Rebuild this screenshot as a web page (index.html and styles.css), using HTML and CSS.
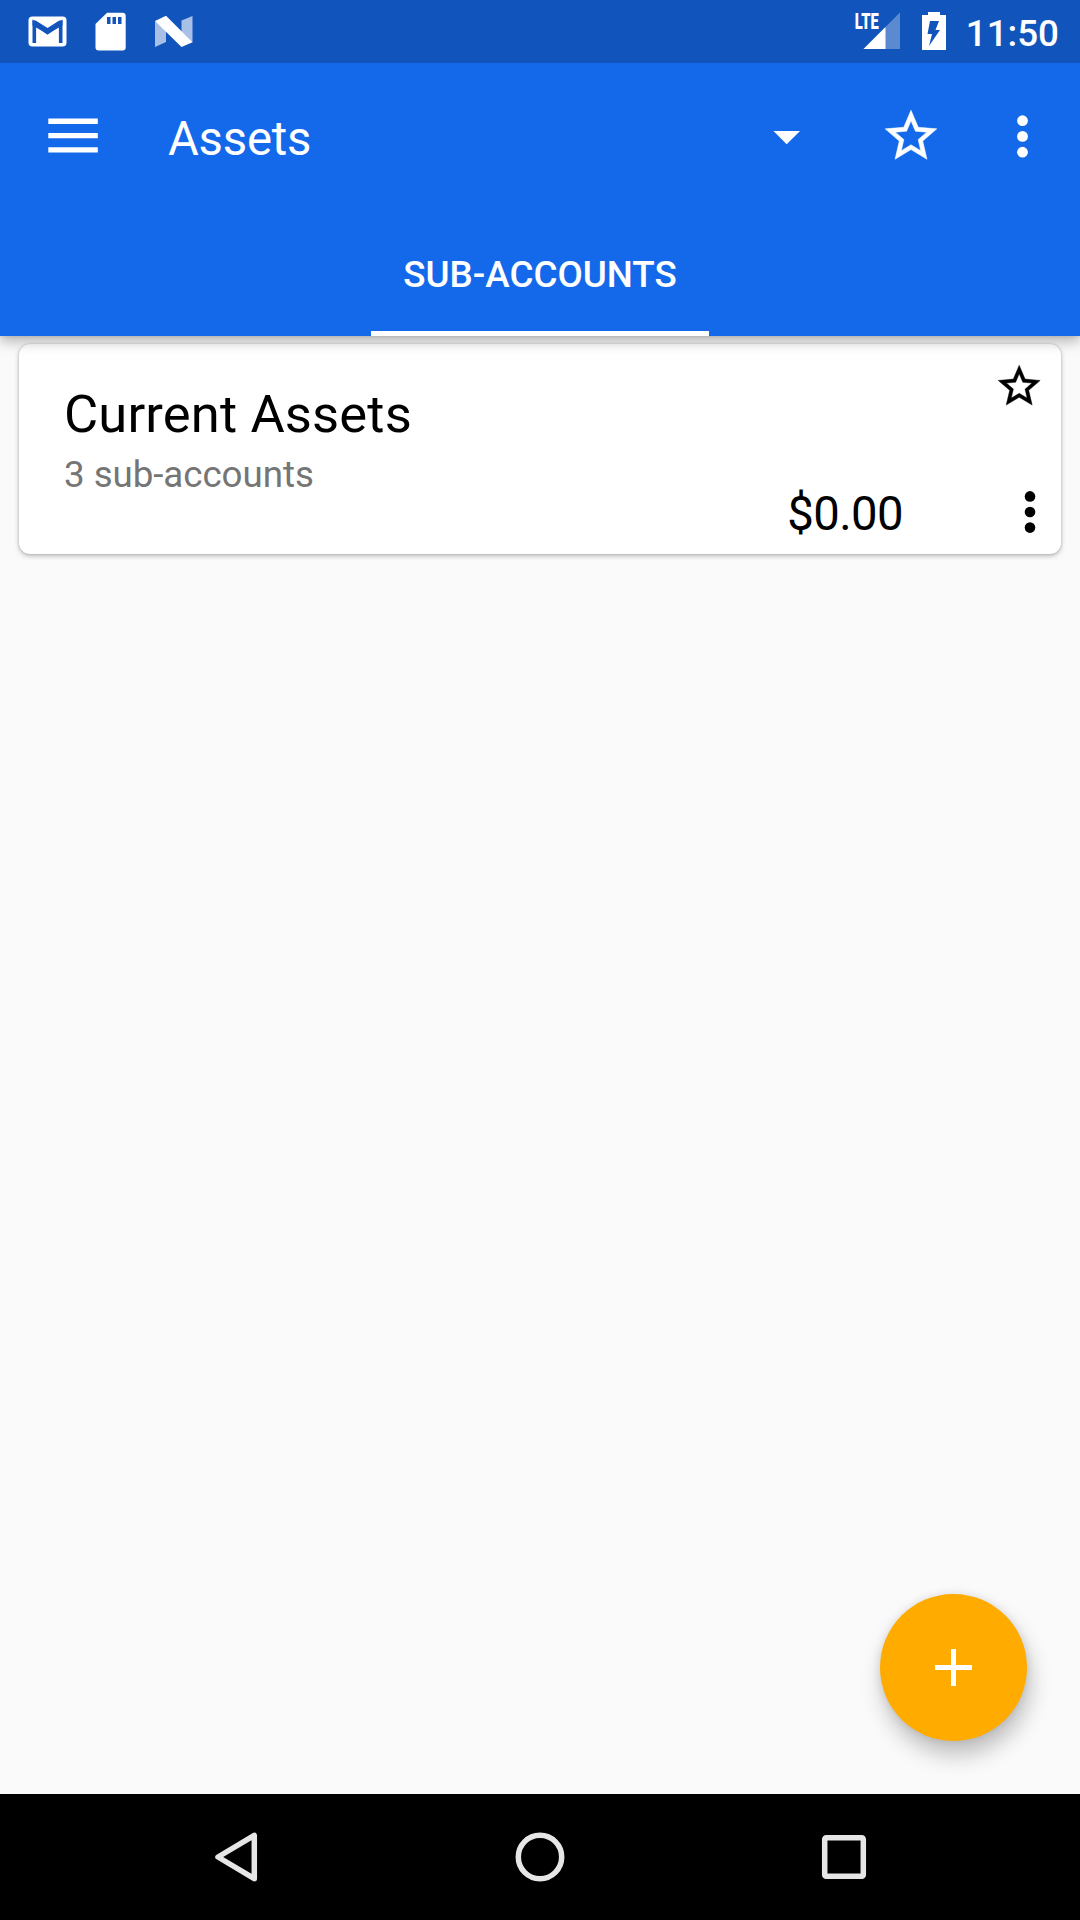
FILE: index.html
```html
<!DOCTYPE html>
<html lang="en">
<head>
<meta charset="utf-8">
<title>Assets</title>
<link rel="stylesheet" href="styles.css">
</head>
<body>
<div class="screen">
  <header class="header">
    <div class="status-bar">
      <div class="notifications">
        <svg width="40" height="40" viewBox="0 0 40 40"><rect x="1.500" y="4.500" width="38" height="30" rx="4" fill="#fff"/><path d="M7.300 31V11l13.200 9.500L33.700 11V31" fill="none" stroke="#1155bc" stroke-width="3.600"/><path d="M5.500 8.500h3.200l11.800 7.500 11.800-7.500h3.200v5l-15 8.500-15-8.500z" fill="#1155bc"/></svg>
        <svg width="32" height="40" viewBox="0 0 32 40"><path d="M12 .7h15.500a3.200 3.200 0 0 1 3.200 3.200v31.400a3.200 3.200 0 0 1-3.200 3.200H3.700A3.200 3.200 0 0 1 .5 35.300V12z" fill="#fff"/><path d="M12 5h3.500v7H12zM17.500 5H21v7h-3.500zM23 5h3.500v7H23z" fill="#1155bc"/></svg>
        <svg width="40" height="40" viewBox="0 0 40 40"><path d="M1 9l11 8v13L1 35zM27.500 8.500L38.500 4v26.500l-11-8z" fill="#a8c0e6"/><path d="M1 9l11-5.200 26.500 26.500L27.500 35z" fill="#fff"/></svg>
      </div>
      <div class="system">
        <svg class="signal" width="48" height="46" viewBox="0 0 48 46"><path d="M47 6.500V43H10.500z" fill="#5b8ad1"/><path d="M32.500 21v22h-22z" fill="#fff"/><path d="M0 6h26v18H0z" fill="#1155bc"/><text x="1.700" y="22.800" class="lte" textLength="24" lengthAdjust="spacingAndGlyphs">LTE</text></svg>
        <svg class="battery" width="24" height="38" viewBox="0 0 24 38"><path d="M6 0h12v3h6v35H0V3h6z" fill="#fff"/><path d="M8 9h9l-3.500 9H18L7 34l3-12H5.500z" fill="#1155bc"/></svg>
        <span class="clock">11:50</span>
      </div>
    </div>
    <div class="toolbar">
      <svg class="menu" width="50" height="36" viewBox="0 0 50 36"><path d="M.3.600h49.500v5.400H.3zM.3 15h49.500v5.300H.3zM.3 29.200h49.500v5.400H.3z" fill="#fff"/></svg>
      <h1 class="title">Assets</h1>
      <svg class="caret" width="28" height="14" viewBox="0 0 28 14"><path d="M.5 0h26.500L13.700 13.300z" fill="#fff"/></svg>
      <svg class="bar-star" width="62" height="62" viewBox="0 0 24 24"><path class="star" d="M22 9.240l-7.190-.62L12 2 9.190 8.630 2 9.240l5.460 4.730L5.820 21 12 17.270 18.180 21l-1.630-7.030zM12 15.400l-3.760 2.270 1-4.280-3.320-2.880 4.380-.38L12 6.100l1.710 4.040 4.380.38-3.320 2.880 1 4.280z"/></svg>
      <svg class="bar-dots" width="12" height="44" viewBox="0 0 12 44"><g fill="#fff"><circle cx="6.500" cy="6.700" r="5.400"/><circle cx="6.500" cy="22.400" r="5.400"/><circle cx="6.500" cy="38.200" r="5.400"/></g></svg>
    </div>
    <nav class="tabs"><span class="tab">SUB-ACCOUNTS</span></nav>
  </header>
  <main class="content">
    <article class="card">
      <div class="account">
        <h2 class="name">Current Assets</h2>
        <p class="detail">3 sub-accounts</p>
      </div>
      <span class="balance">$0.00</span>
      <div class="actions">
        <svg width="50.400" height="50.400" viewBox="0 0 24 24"><path class="star" d="M22 9.240l-7.190-.62L12 2 9.190 8.630 2 9.240l5.460 4.730L5.820 21 12 17.270 18.180 21l-1.630-7.030zM12 15.400l-3.760 2.270 1-4.280-3.320-2.880 4.380-.38L12 6.100l1.710 4.040 4.380.38-3.320 2.880 1 4.280z"/></svg>
        <svg class="card-dots" width="12" height="44" viewBox="0 0 12 44"><circle cx="6" cy="6.400" r="5.300"/><circle cx="6" cy="22" r="5.300"/><circle cx="6" cy="37.600" r="5.300"/></svg>
      </div>
    </article>
    <div class="fab"><svg width="37" height="37" viewBox="0 0 37 37"><path d="M16 0h5v16h16v5H21v16h-5V21H0v-5h16z" fill="#fff"/></svg></div>
  </main>
  <footer class="nav-bar">
    <svg width="50" height="54" viewBox="0 0 50 54"><path d="M7 27L43.300 5.300v43.400z" class="nav-line"/></svg>
    <svg width="54" height="54" viewBox="0 0 54 54"><circle cx="27" cy="27" r="21.700" class="nav-line"/></svg>
    <svg width="50" height="54" viewBox="0 0 50 54"><rect x="5.700" y="7.700" width="38.600" height="38.600" rx="1.500" class="nav-line"/></svg>
  </footer>
</div>
</body>
</html>
```
FILE: styles.css
```css
* { box-sizing: border-box; }
body { margin: 0; font-family: Roboto, sans-serif; }
h1, h2, p { margin: 0; font-weight: 400; }
svg { display: block; flex: none; }

.screen {
  width: 1080px;
  height: 1920px;
  display: flex;
  flex-direction: column;
  overflow: hidden;
  background: #fafafa;
}

.header {
  position: relative;
  z-index: 1;
  height: 336px;
  display: flex;
  flex-direction: column;
  color: #fff;
  background: #1469ea;
  box-shadow: 0 6px 12px rgba(0, 0, 0, .26), 0 0 4px rgba(0, 0, 0, .12);
}

.status-bar {
  height: 63px;
  display: flex;
  justify-content: space-between;
  padding: 0 21px 0 27px;
  background: #1155bc;
}
.notifications { display: flex; padding-top: 12px; }
.notifications svg:nth-child(2) { margin: 0 27px 0 28px; }
.system { display: flex; padding-top: 6px; }
.signal { margin-right: 21px; }
.battery { margin: 6px 20px 0 0; }
.lte { font-size: 22px; font-weight: 900; fill: #fff; }
.clock { margin-top: 6px; font-size: 36.750px; font-weight: 500; line-height: 43px; }

.toolbar {
  height: 147px;
  display: flex;
  align-items: flex-start;
  padding: 0 52px 0 48px;
}
.menu { margin-top: 55px; }
.title { margin: 46px 0 0 70px; font-size: 47.250px; line-height: 60px; letter-spacing: -.2px; }
.caret { margin: 68px 79px 0 auto; }
.bar-star { margin: 42px 74px 0 0; fill: #fff; stroke: #fff; }
.star { stroke-width: .2px; }
.actions .star { stroke: #000; }
.bar-dots { margin-top: 51px; }

.tabs { height: 126px; display: flex; justify-content: center; }
.tab {
  width: 338px;
  border-bottom: 5px solid #fff;
  font-size: 36.750px;
  font-weight: 500;
  line-height: 129px;
  text-align: center;
}

.content {
  height: 1458px;
  display: flex;
  flex-direction: column;
  justify-content: space-between;
  padding: 8px 19px 53px;
}
.card {
  height: 210px;
  display: flex;
  background: #fff;
  border-radius: 11px;
  box-shadow: 0 2px 5px rgba(0, 0, 0, .26), 0 0 2px rgba(0, 0, 0, .2);
}
.account { flex: 1; padding: 40px 0 0 45px; }
.name { font-size: 52.500px; line-height: 60px; letter-spacing: .15px; color: #000; }
.detail { margin-top: 9px; font-size: 36.750px; line-height: 43px; letter-spacing: -.07px; color: #757575; }
.balance {
  align-self: flex-end;
  margin: 0 91px 10px 0;
  font-size: 47.250px;
  line-height: 60px;
  letter-spacing: -.6px;
}
.actions { width: 67px; padding-top: 17px; }
.card-dots { margin: 79px 0 0 30px; }

.fab {
  align-self: flex-end;
  width: 147px;
  height: 147px;
  margin-right: 34px;
  display: flex;
  align-items: center;
  justify-content: center;
  border-radius: 50%;
  background: #ffab00;
  box-shadow: 3px 14px 22px rgba(0, 0, 0, .24), 0 0 8px rgba(0, 0, 0, .1);
}

.nav-bar {
  height: 126px;
  display: flex;
  justify-content: space-between;
  align-items: center;
  padding: 0 211px;
  background: #000;
}
.nav-line { fill: none; stroke: #e6e6e6; stroke-width: 5.500px; stroke-linejoin: round; }
```
